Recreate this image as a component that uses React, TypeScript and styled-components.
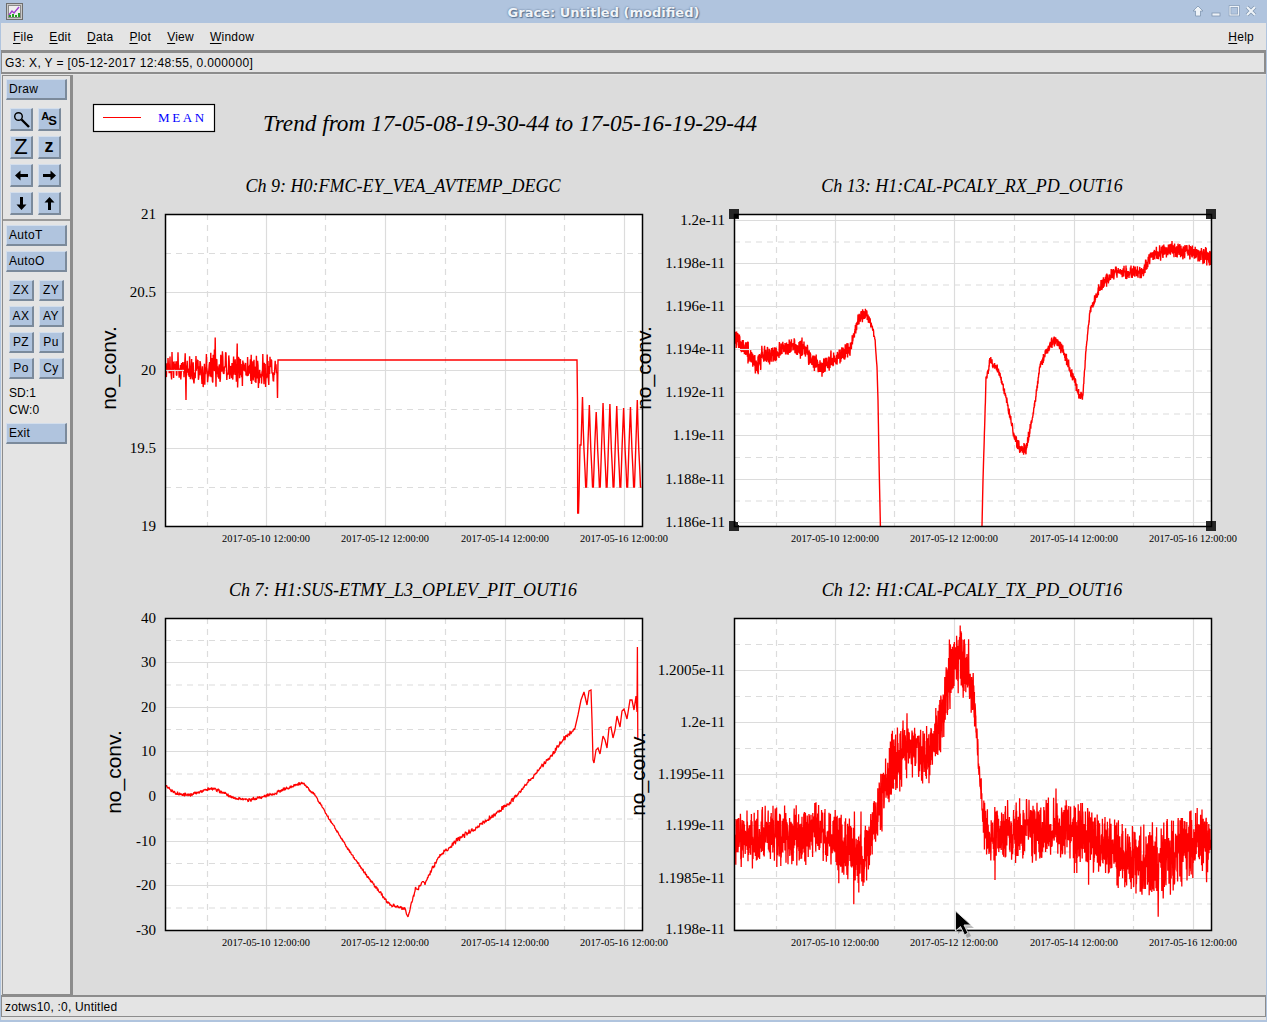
import * as React from "react";
import styled, { createGlobalStyle } from "styled-components";

const GlobalStyle = createGlobalStyle`
  html, body {
    margin: 0;
    padding: 0;
    background: #e4e4e4;
    overflow: hidden;
  }
  * {
    box-sizing: border-box;
  }
`;

const Window = styled.div`
  width: 1267px;
  height: 1022px;
  display: flex;
  flex-direction: column;
  background: #e4e4e4;
  border-left: 1px solid #b0c4de;
  border-right: 1px solid #b0c4de;
  border-bottom: 2px solid #b0c4de;
  font-family: "Liberation Sans", Arial, sans-serif;
  font-size: 12px;
  color: #000;
`;

const TitleBar = styled.div`
  height: 23px;
  flex: none;
  position: relative;
  display: flex;
  align-items: center;
  justify-content: center;
  background: #b0c4de;
  margin: 0 -1px;
`;
const TitleText = styled.div`
  font-family: "DejaVu Sans", sans-serif;
  font-weight: 700;
  font-size: 13px;
  color: #f0f4f8;
  text-shadow: 0 0 2px #4f6886, 1px 1px 1px #5f7896;
  margin-right: 60px;
  margin-top: 1px;
`;
const AppIcon = styled.svg`
  position: absolute;
  left: 6px;
  top: 3px;
`;
const WindowButtons = styled.svg`
  position: absolute;
  left: 1191px;
  top: 5px;
`;

const MenuBar = styled.div`
  height: 29px;
  flex: none;
  display: flex;
  align-items: center;
  gap: 16px;
  padding: 0 12px;
  border-bottom: 2px solid #8c8c8c;
`;
const MenuItem = styled.span<{ $right?: boolean }>`
  letter-spacing: 0.25px;
  margin-left: ${(p) => (p.$right ? "auto" : "0")};
  u {
    text-underline-offset: 2px;
  }
`;

const InfoBar = styled.div`
  height: 22px;
  flex: none;
  display: flex;
  align-items: center;
  padding-left: 3px;
  letter-spacing: 0.35px;
  border: 1px solid #8c8c8c;
  border-bottom-width: 2px;
  border-right-width: 2px;
`;

const Main = styled.div`
  flex: 1;
  min-height: 0;
  display: flex;
  margin-top: 1px;
`;

const ToolPanel = styled.div`
  width: 69px;
  flex: none;
  margin-left: 1px;
  padding: 3px 0 0 3px;
  display: flex;
  flex-direction: column;
  border: 1px solid #8c8c8c;
`;
const Raised = styled.button`
  padding: 0;
  margin: 0;
  font: inherit;
  color: #000;
  background: #b0c4de;
  border-style: solid;
  border-color: #d3deec #7b8a9b #7b8a9b #d3deec;
  border-width: 1px 2px 2px 1px;
  display: flex;
  align-items: center;
`;
const WideButton = styled(Raised)<{ $top?: number }>`
  width: 61px;
  height: 21px;
  padding-left: 2px;
  letter-spacing: 0.3px;
  margin-top: ${(p) => p.$top ?? 0}px;
`;
const IconGrid = styled.div`
  display: grid;
  grid-template-columns: 23px 23px;
  grid-auto-rows: 23px;
  gap: 5px;
  margin: 8px 0 0 4px;
`;
const IconButton = styled(Raised)`
  justify-content: center;
`;
const BigZ = styled.span`
  font-size: 22px;
  line-height: 1;
`;
const SmallZ = styled.span`
  font-size: 18px;
  font-weight: 700;
  line-height: 1;
  margin-top: -2px;
`;
const ASGlyph = styled.span`
  font-size: 11px;
  font-weight: 700;
  line-height: 1;
  display: flex;
  align-items: flex-start;
  span + span {
    font-size: 13px;
    margin-top: 3px;
    margin-left: -1px;
  }
`;
const Divider = styled.div`
  height: 2px;
  margin: 4px 0 4px -3px;
  background: #9a9a9a;
`;
const SmallGrid = styled.div`
  display: grid;
  grid-template-columns: 25px 25px;
  grid-auto-rows: 21px;
  gap: 5px;
  margin: 8px 0 0 3px;
`;
const SmallButton = styled(Raised)`
  justify-content: center;
  letter-spacing: 0.4px;
`;
const StatGroup = styled.div`
  margin: 6px 0 4px;
`;
const Stat = styled.div`
  height: 17px;
  line-height: 17px;
  padding-left: 3px;
  letter-spacing: 0.1px;
`;

const Canvas = styled.div`
  flex: 1;
  min-width: 0;
  background: #dcdcdc;
  border-left: 2px solid #8c8c8c;
  overflow: hidden;
`;

const PlotPage = styled.svg`
  display: block;
`;
const PlotTitle = styled.text`
  font-family: "Liberation Serif", serif;
  font-style: italic;
  font-size: 23.25px;
  fill: #000;
`;
const GraphTitle = styled.text`
  font-family: "Liberation Serif", serif;
  font-style: italic;
  font-size: 18px;
  text-anchor: middle;
  fill: #000;
`;
const YTick = styled.text`
  font-family: "Liberation Serif", serif;
  font-size: 15px;
  text-anchor: end;
  fill: #000;
`;
const XTick = styled.text`
  font-family: "Liberation Serif", serif;
  font-size: 10.4px;
  text-anchor: middle;
  fill: #000;
`;
const AxisName = styled.text`
  font-family: "Liberation Sans", sans-serif;
  font-size: 21px;
  text-anchor: middle;
  fill: #000;
`;
const LegendName = styled.text`
  font-family: "Liberation Serif", serif;
  font-size: 13px;
  letter-spacing: 2.6px;
  fill: #0000ff;
`;

const StatusBar = styled.div`
  height: 22px;
  flex: none;
  display: flex;
  align-items: center;
  padding-left: 3px;
  margin-bottom: 3px;
  letter-spacing: 0.2px;
  border: 1px solid #8c8c8c;
  border-top-width: 2px;
  border-bottom-width: 1px;
`;

type Key = [number, number, number];

function rng(seed: number) {
  let a = seed;
  return () => {
    a = (a + 0x6d2b79f5) | 0;
    let t = Math.imul(a ^ (a >>> 15), 1 | a);
    t = (t + Math.imul(t ^ (t >>> 7), 61 | t)) ^ t;
    return ((t ^ (t >>> 14)) >>> 0) / 4294967296;
  };
}

// walks the key points and scatters noise around them, one step per 1/perPx
function noisy(keys: Key[], perPx: number, seed: number, spikeP = 0, spikeMul = 1) {
  const r = rng(seed);
  const pts: string[] = [];
  let i = 0;
  const start = keys[0][0];
  const last = keys[keys.length - 1];
  for (let x = start; x < last[0]; x += 1 / perPx) {
    while (i < keys.length - 2 && x > keys[i + 1][0]) i++;
    const a = keys[i];
    const b = keys[i + 1];
    const t = (x - a[0]) / (b[0] - a[0]);
    const y = a[1] + (b[1] - a[1]) * t;
    const amp = a[2] + (b[2] - a[2]) * t;
    let n = (r() + r() - 1) * amp * 1.5;
    if (r() < spikeP) n *= spikeMul;
    pts.push(`${x.toFixed(2)} ${(y + n).toFixed(1)}`);
  }
  pts.push(`${last[0]} ${last[1]}`);
  return "M" + pts.join(" L");
}

function poly(points: number[][]) {
  return points.map((p) => `${p[0]} ${p[1]}`).join(" L");
}

function buildCh9() {
  const head = noisy(
    [
      [166, 370, 11],
      [176, 366, 12],
      [186, 370, 13],
      [230, 371, 14],
      [265, 371, 13],
      [277, 372, 10],
    ],
    2.5,
    11,
    0.08,
    1.7
  );
  const tops = [397, 405, 412, 403, 404, 406, 408, 407, 400];
  const swing: number[][] = [
    [277.5, 398],
    [278, 360],
    [577, 360],
    [577.5, 400],
    [577.7, 513],
    [578.5, 513],
    [579, 495],
    [580, 445],
    [581, 445],
  ];
  tops.forEach((top, i) => {
    const x = 582.5 + i * 6.85;
    swing.push([x, top], [x + 0.8, 430], [x + 1.5, 450], [x + 2.5, 470], [x + 3.2, 487], [x + 4, 487], [x + 4.6, 470], [x + 5.4, 445]);
  });
  return [head + " L" + poly(swing.filter((p) => p[0] < 641.5))];
}

function buildCh13() {
  const left = noisy(
    [
      [735, 342, 8],
      [745, 348, 8],
      [757, 366, 9],
      [762, 356, 8],
      [775, 354, 7],
      [790, 345, 6.5],
      [805, 351, 7],
      [820, 368, 7],
      [835, 359, 7],
      [850, 349, 6],
      [858, 320, 5],
      [865, 313, 5],
      [872, 325, 4],
      [875, 340, 1.5],
      [877, 367, 0.5],
      [878, 400, 0],
      [879.2, 470, 0],
      [880.4, 526, 0],
    ],
    5,
    22,
    0.03,
    1.5
  );
  const right = noisy(
    [
      [982, 526, 0],
      [983, 480, 0.5],
      [986, 380, 3],
      [990, 362, 4.5],
      [998, 369, 3],
      [1006, 397, 3.5],
      [1014, 436, 4.5],
      [1020, 450, 5.5],
      [1026, 449, 4.5],
      [1033, 415, 3],
      [1040, 366, 3],
      [1050, 343, 4.5],
      [1058, 341, 4.5],
      [1065, 356, 4.5],
      [1075, 382, 4.5],
      [1080, 397, 4.5],
      [1083, 395, 3],
      [1086, 350, 1.5],
      [1090, 312, 3],
      [1100, 287, 4.5],
      [1115, 272, 5],
      [1130, 273, 5],
      [1143, 272, 5],
      [1150, 257, 5],
      [1165, 251, 6],
      [1175, 249, 6],
      [1190, 253, 6],
      [1200, 255, 6],
      [1211, 257, 7],
    ],
    5,
    23
  );
  return [left, right];
}

function buildCh7() {
  const body = noisy(
    [
      [166, 786, 1.4],
      [175, 793, 1.4],
      [190, 795, 1.4],
      [212, 788, 1.4],
      [235, 798, 1.4],
      [250, 800, 1.4],
      [270, 795, 1.6],
      [290, 787, 2.2],
      [303, 783, 1.4],
      [315, 795, 1],
      [330, 820, 1],
      [350, 852, 1],
      [370, 880, 1.4],
      [390, 905, 1.6],
      [405, 909, 1.4],
      [408, 917, 0.5],
      [415, 890, 2],
      [425, 882, 2],
      [440, 855, 2],
      [460, 838, 2],
      [480, 825, 2],
      [510, 803, 2],
      [530, 780, 2],
      [550, 757, 2],
      [560, 743, 2],
      [575, 728, 1.4],
    ],
    2,
    33
  );
  const tail = poly([
    [578, 715],
    [581, 700],
    [584, 692],
    [587, 705],
    [589, 691],
    [591, 690],
    [592, 720],
    [593, 760],
    [594, 763],
    [596, 750],
    [598, 748],
    [600, 754],
    [603, 736],
    [605, 740],
    [607, 748],
    [609, 728],
    [611, 727],
    [613, 738],
    [615, 730],
    [617, 716],
    [620, 727],
    [622, 711],
    [624, 709],
    [627, 719],
    [630, 700],
    [632, 700],
    [634, 710],
    [636, 696],
    [637, 712],
    [637.4, 647],
    [637.8, 740],
  ]);
  return [body + " L" + tail];
}

function buildCh12() {
  return [
    noisy(
      [
        [735, 838, 22],
        [760, 838, 22],
        [790, 835, 23],
        [820, 832, 22],
        [850, 850, 25],
        [862, 862, 25],
        [875, 825, 24],
        [890, 772, 26],
        [905, 747, 24],
        [925, 757, 20],
        [940, 722, 24],
        [952, 668, 26],
        [960, 652, 28],
        [968, 672, 24],
        [974, 700, 16],
        [980, 780, 10],
        [984, 825, 18],
        [990, 838, 22],
        [1020, 830, 24],
        [1050, 828, 25],
        [1080, 832, 24],
        [1110, 850, 24],
        [1130, 860, 25],
        [1150, 863, 28],
        [1175, 855, 28],
        [1211, 842, 28],
      ],
      5,
      44,
      0.04,
      1.5
    ),
  ];
}

type GraphSpec = {
  title: string;
  titleX: number;
  left: number;
  top: number;
  yTicks: [string, number][];
  yMinor: number[];
  nameX: number;
  nameY: number;
  traces: string[];
  patch?: [number, number, number];
  strokeW: number;
  selected?: boolean;
};

const W = 477;
const H = 312;
const X_LABELS = ["2017-05-10 12:00:00", "2017-05-12 12:00:00", "2017-05-14 12:00:00", "2017-05-16 12:00:00"];
const X_MAJOR = [101, 220, 340, 459];
const X_MINOR = [42, 160, 280, 399];

function mids(t: number[]) {
  return t.slice(1).map((v, i) => (v + t[i]) / 2);
}

function ticks(labels: string[], ys: number[]): [string, number][] {
  return labels.map((l, i) => [l, ys[i]]);
}

const ch13Y = [220, 263, 306, 349, 392, 435, 479, 522];
const ch12Y = [670, 722, 774, 825, 878, 929];
const ch7Y = [618, 662, 707, 751, 796, 841, 885, 930];

const GRAPHS: GraphSpec[] = [
  {
    title: "Ch 9: H0:FMC-EY_VEA_AVTEMP_DEGC",
    titleX: 403,
    left: 165,
    top: 214,
    yTicks: ticks(["21", "20.5", "20", "19.5", "19"], [214, 292, 370, 448, 526]),
    yMinor: [253, 331, 409, 487],
    nameX: 116,
    nameY: 368,
    traces: buildCh9(),
    patch: [166, 184, 370],
    strokeW: 1.4,
  },
  {
    title: "Ch 13: H1:CAL-PCALY_RX_PD_OUT16",
    titleX: 972,
    left: 734,
    top: 214,
    yTicks: ticks(
      ["1.2e-11", "1.198e-11", "1.196e-11", "1.194e-11", "1.192e-11", "1.19e-11", "1.188e-11", "1.186e-11"],
      ch13Y
    ),
    yMinor: mids(ch13Y),
    nameX: 651,
    nameY: 368,
    traces: buildCh13(),
    patch: [735, 753, 349],
    strokeW: 1.4,
    selected: true,
  },
  {
    title: "Ch 7: H1:SUS-ETMY_L3_OPLEV_PIT_OUT16",
    titleX: 403,
    left: 165,
    top: 618,
    yTicks: ticks(["40", "30", "20", "10", "0", "-10", "-20", "-30"], ch7Y),
    yMinor: mids(ch7Y),
    nameX: 121,
    nameY: 772,
    traces: buildCh7(),
    strokeW: 1.3,
  },
  {
    title: "Ch 12: H1:CAL-PCALY_TX_PD_OUT16",
    titleX: 972,
    left: 734,
    top: 618,
    yTicks: ticks(["1.2005e-11", "1.2e-11", "1.1995e-11", "1.199e-11", "1.1985e-11", "1.198e-11"], ch12Y),
    yMinor: [644, ...mids(ch12Y)],
    nameX: 645,
    nameY: 774,
    traces: buildCh12(),
    strokeW: 1.3,
  },
];

function Graph({ spec }: { spec: GraphSpec }) {
  const { left, top } = spec;
  const corners = [
    [left, top],
    [left + W, top],
    [left, top + H],
    [left + W, top + H],
  ];
  return (
    <g>
      <GraphTitle x={spec.titleX} y={top - 22}>
        {spec.title}
      </GraphTitle>
      <rect x={left} y={top} width={W} height={H} fill="#fff" />
      <g stroke="#dcdcdc" strokeWidth={1.2} fill="none">
        {X_MAJOR.map((x) => (
          <line key={x} x1={left + x + 0.5} x2={left + x + 0.5} y1={top} y2={top + H} />
        ))}
        {spec.yTicks.map(([l, y]) => (
          <line key={l} x1={left} x2={left + W} y1={y + 0.5} y2={y + 0.5} />
        ))}
      </g>
      <g stroke="#dcdcdc" strokeWidth={1.2} strokeDasharray="6 5" fill="none">
        {X_MINOR.map((x) => (
          <line key={x} x1={left + x + 0.5} x2={left + x + 0.5} y1={top} y2={top + H} />
        ))}
        {spec.yMinor.map((y) => (
          <line key={y} x1={left} x2={left + W} y1={y + 0.5} y2={y + 0.5} />
        ))}
      </g>
      {spec.traces.map((d, i) => (
        <path key={i} d={d} fill="none" stroke="#ff0000" strokeWidth={spec.strokeW} strokeLinejoin="miter" strokeMiterlimit={2} />
      ))}
      {spec.patch && (
        <line x1={spec.patch[0]} x2={spec.patch[1]} y1={spec.patch[2] + 0.5} y2={spec.patch[2] + 0.5} stroke="#e6e6e6" strokeWidth={1.2} />
      )}
      {spec.selected &&
        corners.map(([x, y]) => <rect key={`${x}-${y}`} x={x - 5} y={y - 5} width={10} height={10} fill="#262626" />)}
      {spec.selected && <rect x={left + 1} y={top + 1} width={3} height={3} fill="#000" />}
      {spec.selected && <path d={`M${left + 1.5} ${top + H - 4.5} H${left + 4.5} V${top + H - 1}`} fill="none" stroke="#fff" strokeWidth={1} />}
      <rect x={left + 0.5} y={top + 0.5} width={W} height={H} fill="none" stroke="#000" strokeWidth={1.5} />
      {spec.yTicks.map(([l, y]) => (
        <YTick key={l} x={left - 9} y={y + 5}>
          {l}
        </YTick>
      ))}
      {X_LABELS.map((l, i) => (
        <XTick key={l} x={left + X_MAJOR[i]} y={top + H + 15.5}>
          {l}
        </XTick>
      ))}
      <AxisName x={spec.nameX} y={spec.nameY} transform={`rotate(-90 ${spec.nameX} ${spec.nameY})`}>
        no_conv.
      </AxisName>
    </g>
  );
}

function MagnifierIcon() {
  return (
    <svg width="19" height="19" viewBox="0 0 19 19">
      <circle cx="6.5" cy="6.5" r="3.8" fill="none" stroke="#000" strokeWidth="1.4" />
      <path d="M9.5 9.5 L17 17" stroke="#000" strokeWidth="2.4" />
    </svg>
  );
}

function ArrowIcon({ dir }: { dir: "left" | "right" | "up" | "down" }) {
  const angle = { right: 0, down: 90, left: 180, up: 270 }[dir];
  return (
    <svg width="15" height="15" viewBox="0 0 15 15">
      <path transform={`rotate(${angle} 7.5 7.5)`} d="M1 6 H8.5 V2.5 L14 7.5 L8.5 12.5 V9 H1 Z" fill="#000" />
    </svg>
  );
}

const SMALL_BUTTONS = ["ZX", "ZY", "AX", "AY", "PZ", "Pu", "Po", "Cy"];

export default function App() {
  return (
    <>
      <GlobalStyle />
      <Window>
        <TitleBar>
          <AppIcon width="17" height="17" viewBox="0 0 17 17">
            <rect x="0.5" y="0.5" width="16" height="16" fill="#c8c8c8" stroke="#6e6e6e" />
            <rect x="2.5" y="2.5" width="12" height="12" fill="#efefef" stroke="#8a8a8a" />
            <path d="M3 12 L6 8 L8 10 L13 4" fill="none" stroke="#a040d0" strokeWidth="1.4" />
            <path d="M4 14 V12 M7 14 V11 M10 14 V12 M13 14 V10" stroke="#20a020" strokeWidth="2" />
          </AppIcon>
          <TitleText>Grace: Untitled (modified)</TitleText>
          <WindowButtons width="70" height="14" viewBox="0 0 70 14">
            <path d="M7 1 L12 6 H9.5 V11 H4.5 V6 H2 Z" fill="#eef3f8" stroke="#7f95b0" strokeWidth="0.8" />
            <rect x="21" y="8" width="8" height="3" fill="#eef3f8" stroke="#7f95b0" strokeWidth="0.8" />
            <rect x="39" y="1.5" width="8.5" height="8.5" fill="none" stroke="#7f95b0" strokeWidth="2.4" />
            <rect x="39" y="1.5" width="8.5" height="8.5" fill="none" stroke="#eef3f8" strokeWidth="1.2" />
            <path d="M56 2 L64 10 M64 2 L56 10" stroke="#7f95b0" strokeWidth="3.6" />
            <path d="M56 2 L64 10 M64 2 L56 10" stroke="#eef3f8" strokeWidth="2.2" />
          </WindowButtons>
        </TitleBar>
        <MenuBar>
          <MenuItem><u>F</u>ile</MenuItem>
          <MenuItem><u>E</u>dit</MenuItem>
          <MenuItem><u>D</u>ata</MenuItem>
          <MenuItem><u>P</u>lot</MenuItem>
          <MenuItem><u>V</u>iew</MenuItem>
          <MenuItem><u>W</u>indow</MenuItem>
          <MenuItem $right><u>H</u>elp</MenuItem>
        </MenuBar>
        <InfoBar>G3: X, Y = [05-12-2017 12:48:55, 0.000000]</InfoBar>
        <Main>
          <ToolPanel>
            <WideButton>Draw</WideButton>
            <IconGrid>
              <IconButton><MagnifierIcon /></IconButton>
              <IconButton>
                <ASGlyph><span>A</span><span>S</span></ASGlyph>
              </IconButton>
              <IconButton><BigZ>Z</BigZ></IconButton>
              <IconButton><SmallZ>z</SmallZ></IconButton>
              <IconButton><ArrowIcon dir="left" /></IconButton>
              <IconButton><ArrowIcon dir="right" /></IconButton>
              <IconButton><ArrowIcon dir="down" /></IconButton>
              <IconButton><ArrowIcon dir="up" /></IconButton>
            </IconGrid>
            <Divider />
            <WideButton>AutoT</WideButton>
            <WideButton $top={5}>AutoO</WideButton>
            <SmallGrid>
              {SMALL_BUTTONS.map((b) => (
                <SmallButton key={b}>{b}</SmallButton>
              ))}
            </SmallGrid>
            <StatGroup>
              <Stat>SD:1</Stat>
              <Stat>CW:0</Stat>
            </StatGroup>
            <WideButton>Exit</WideButton>
          </ToolPanel>
          <Canvas>
            <PlotPage width="1194" height="920" viewBox="73 75 1194 920">
              <rect x="93.5" y="104.5" width="121" height="27" fill="#fff" stroke="#000" strokeWidth="1.2" />
              <line x1="103" x2="141" y1="117.5" y2="117.5" stroke="#ff0000" strokeWidth="1" />
              <LegendName x="158" y="122">MEAN</LegendName>
              <PlotTitle x="263" y="131">Trend from 17-05-08-19-30-44 to 17-05-16-19-29-44</PlotTitle>
              {GRAPHS.map((g) => (
                <Graph key={g.title} spec={g} />
              ))}
              <path d="M958 914 V934 L963 929.5 L967 938 L971 936 L967 928 L974 928 Z" fill="#000" opacity="0.25" />
              <path d="M955.5 911 V931 L960.5 926.5 L964.5 935 L968 933 L964 925 L971 925 Z" fill="#000" stroke="#ddd" strokeWidth="1" />
            </PlotPage>
          </Canvas>
        </Main>
        <StatusBar>zotws10, :0, Untitled</StatusBar>
      </Window>
    </>
  );
}
